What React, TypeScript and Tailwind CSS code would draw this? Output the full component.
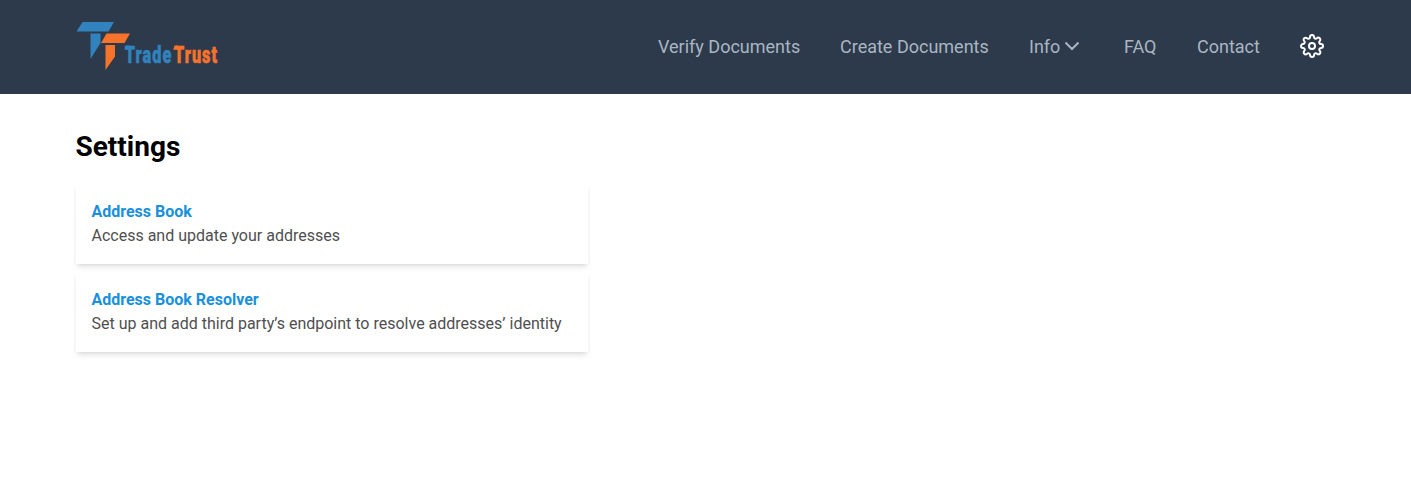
import React from "react";
import { FiSettings } from "react-icons/fi";

function Logo() {
  return (
    <svg className="block h-[50px] w-[150px]" viewBox="0 0 150 50" role="img" aria-label="TradeTrust">
      <path d="M6.5 1H38L32.5 10.5H0.5Z" fill="#3182bd" />
      <path d="M14.5 12.5H24.5V22L14.5 38Z" fill="#3182bd" />
      <path d="M30.5 12.5H54L48.5 22H25Z" fill="#f7722b" />
      <path d="M29.5 24H39V35.5L29.5 49Z" fill="#f7722b" />
      <path d="M50.5 24.6H54V28.5H48.5Z" fill="#3182bd" />
      <path d="M99.5 24.6H102V28.5H97Z" fill="#f7722b" />
      <g fontFamily="Roboto, sans-serif" fontWeight="900" fontSize="24.5" letterSpacing="1.6" strokeWidth="0.6">
        <text transform="translate(48.8 42.3) scale(0.665 1)" fill="#3182bd" stroke="#3182bd">Trade</text>
        <text transform="translate(98 42.3) scale(0.66 1)" fill="#f7722b" stroke="#f7722b">Trust</text>
      </g>
    </svg>
  );
}

function Header() {
  return (
    <header className="h-[94px] bg-[#2d3a4b]">
      <div className="flex h-full justify-between pl-[75.5px] pr-[87px]">
        <div className="pt-[21px]">
          <Logo />
        </div>
        <nav className="flex h-[92px] items-center text-lg leading-7 text-[#a9b6c2]">
          <a className="w-[182px] pt-0.5">Verify Documents</a>
          <a className="w-[189px] pt-0.5">Create Documents</a>
          <a className="flex w-[95px] items-center">
            <span className="pt-0.5">Info</span>
            <svg className="ml-1 h-4 w-4" viewBox="0 0 16 16" fill="none" stroke="currentColor" strokeWidth="2">
              <path d="M1.5 4.5L8 11L14.5 4.5" />
            </svg>
          </a>
          <a className="w-[73px] pt-0.5">FAQ</a>
          <a className="w-[103px] pt-0.5">Contact</a>
          <FiSettings className="h-6 w-6 text-white" />
        </nav>
      </div>
    </header>
  );
}

function SettingsCard({ title, description }: { title: string; description: string }) {
  return (
    <section className="h-20 w-[512px] bg-white p-4 text-base leading-6 shadow-md">
      <h2 className="font-bold text-[#1890dc]">{title}</h2>
      <p className="text-[#4f4f4f]">{description}</p>
    </section>
  );
}

export default function App() {
  return (
    <div className="min-h-[477px] bg-white font-['Roboto',sans-serif] antialiased">
      <Header />
      <main className="px-[75.5px] pt-8">
        <h1 className="text-[28px] font-bold leading-[42px] text-black">Settings</h1>
        <div className="mt-4 flex flex-col gap-2">
          <SettingsCard title="Address Book" description="Access and update your addresses" />
          <SettingsCard
            title="Address Book Resolver"
            description="Set up and add third party’s endpoint to resolve addresses’ identity"
          />
        </div>
      </main>
    </div>
  );
}
